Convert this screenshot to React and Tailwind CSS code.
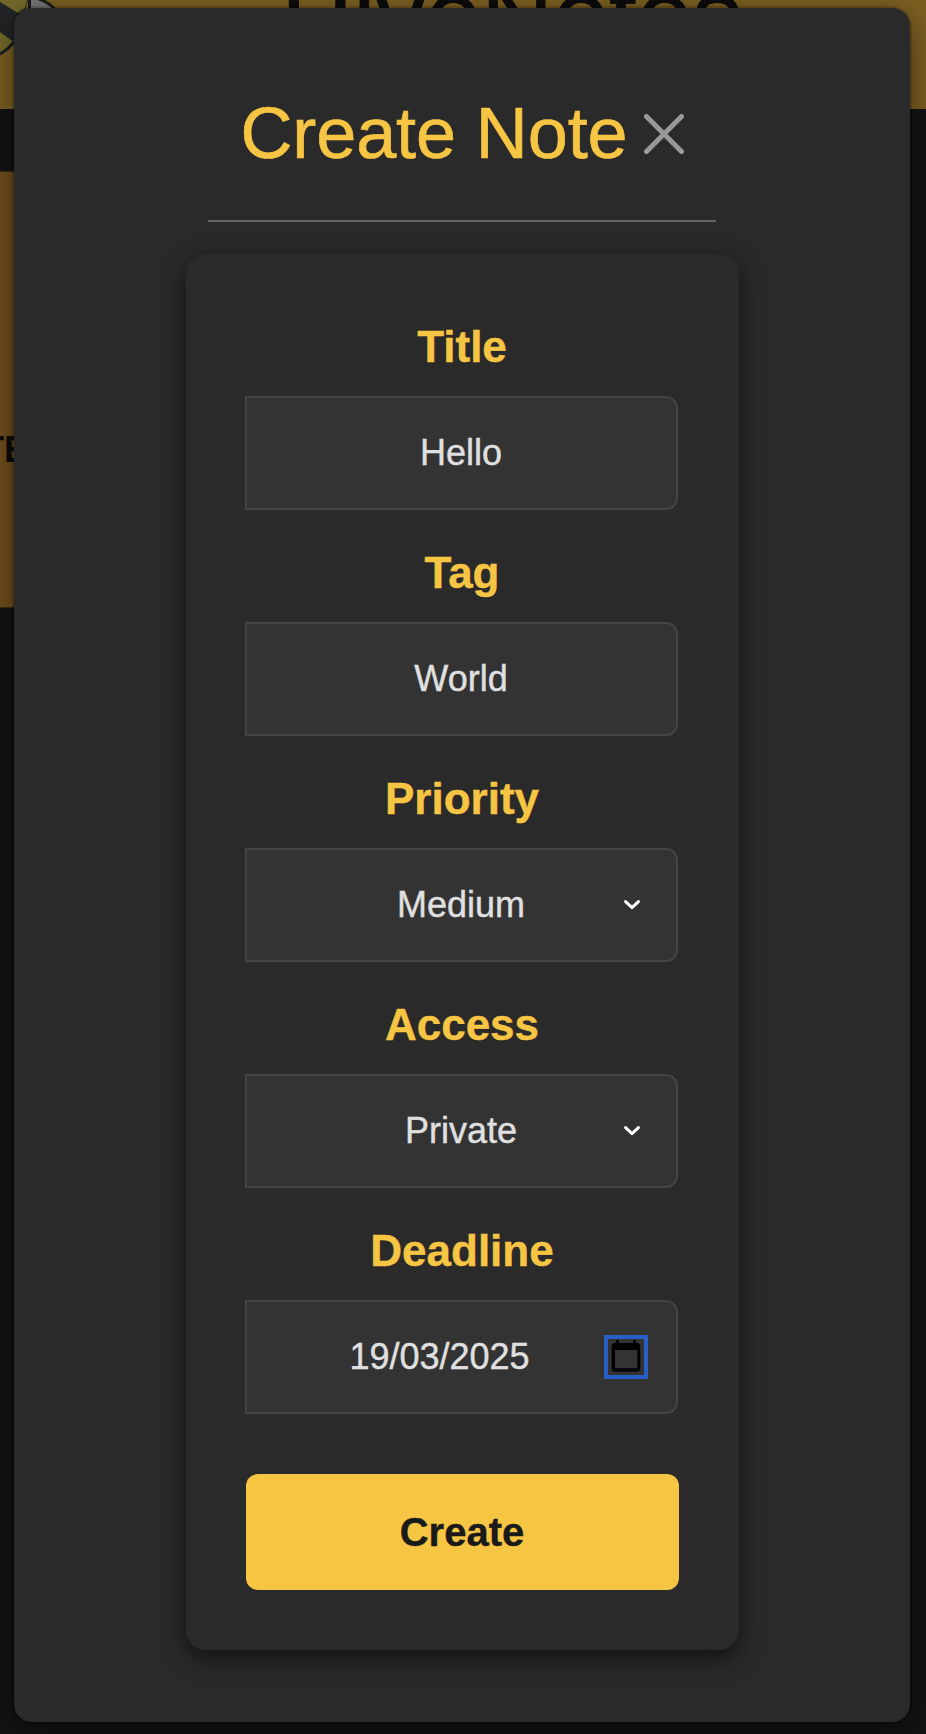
import React from 'react';

const fields = [
  { label: 'Title', value: 'Hello' },
  { label: 'Tag', value: 'World' },
  { label: 'Priority', value: 'Medium', kind: 'select' },
  { label: 'Access', value: 'Private', kind: 'select' },
  { label: 'Deadline', value: '19/03/2025', kind: 'date' },
];

function Chevron() {
  return (
    <svg className="absolute right-[36px] top-[49px] h-[12px] w-[16px]" viewBox="0 0 16 12" fill="none" stroke="#fff" strokeWidth="3" strokeLinecap="round" strokeLinejoin="round">
      <path d="M1.6 2.6 8 8.6l6.4-6" />
    </svg>
  );
}

function CalendarButton() {
  return (
    <span className="absolute right-[28px] top-[33px] h-[44px] w-[44px] border-4 border-[#295ec6]">
      <svg className="block h-[36px] w-[36px]" viewBox="0 0 36 36">
        <path
          fillRule="evenodd"
          fill="#000"
          d="M8 1h3v3h14V1h3v3h1a3.300 3.300 0 0 1 3.300 3.300V29.400a3.300 3.300 0 0 1-3.300 3.300H7a3.300 3.300 0 0 1-3.300-3.300V7.300A3.300 3.300 0 0 1 7 4H8zM7 11v18.300h22.300V11z"
        />
      </svg>
    </span>
  );
}

function Field({ label, value, kind }) {
  return (
    <div className="flex flex-col gap-6">
      <div className="pl-0.5 text-center text-[44px] font-bold leading-[50px] text-[#f7c544] [-webkit-text-stroke:0.4px_#f7c544]">{label}</div>
      <div className={`relative flex h-[114px] w-[433px] items-center justify-center rounded-r-xl border-2 border-[#444] bg-[#333] text-[36px] leading-10 text-[#e0e0e0] [-webkit-text-stroke:0.4px_#e0e0e0] ${kind === 'date' ? 'pr-[43px]' : ''}`}>
        {value}
        {kind === 'select' && <Chevron />}
        {kind === 'date' && <CalendarButton />}
      </div>
    </div>
  );
}

function Logo() {
  return (
    <svg className="block h-[60px] w-[60px]" viewBox="0 0 60 60">
      <path d="M0 0H28L25 11 13 42 0 55z" fill="#222426" />
      <path d="M0 0H27L25 8 18 13 0 2z" fill="#756a2b" />
      <path d="M0 32 13 41.500 0 54z" fill="#756a2b" />
      <path d="M14 41.500Q9 49 0 54" stroke="#1b1d1e" strokeWidth="3" fill="none" />
      <path d="M30 0H39Q48 3 53 9H31z" fill="#777" />
      <path d="M29.500 0V9M39 -1Q48 2 55 9" stroke="#1b1d1e" strokeWidth="3" fill="none" />
    </svg>
  );
}

function Backdrop() {
  return (
    <div className="flex h-[1734px] flex-col bg-[#131313]">
      <div className="flex h-[109px] shrink-0 overflow-hidden bg-[#7c6022]">
        <Logo />
        <div className="-mt-[35px] ml-[221px] text-[100px] leading-[100px] text-[#0c0c0c] [-webkit-text-stroke:0.8px_#0c0c0c]">HiveNotes</div>
      </div>
      <div className="mt-[62px] flex h-[437px] w-[14px] items-start justify-end overflow-hidden rounded-r-[3px] border-y border-[#3d2b10] bg-[#704f1c]">
        <div className="-mr-[14px] mt-[258px] text-[36px] font-bold leading-[40px] text-[#0b0b0b]">NOTE</div>
      </div>
    </div>
  );
}

export default function App() {
  return (
    <div className="relative h-[1734px] w-[926px] overflow-hidden font-['Liberation_Sans',Arial,sans-serif]">
      <Backdrop />
      <div className="absolute left-[14px] top-[8px] flex h-[1714px] w-[896px] flex-col items-center rounded-[18px] bg-[#2a2a2a] shadow-[0_0_0_2px_rgba(0,0,0,0.15),0_8px_32px_rgba(0,0,0,0.5)]">
        <div className="mt-[84px] flex h-[130px] w-[508px] justify-center border-b-2 border-[#666]">
          <h1 className="text-[72px] leading-[82px] tracking-[-0.1px] text-[#f7c544] [-webkit-text-stroke:0.7px_#f7c544]">Create Note</h1>
          <svg className="ml-[16px] mt-[22px] h-[40px] w-[40px]" viewBox="0 0 40 40" stroke="#999" strokeWidth="5" strokeLinecap="round">
            <path d="M2.500 2.500 37.500 37.500M37.500 2.500 2.500 37.500" />
          </svg>
        </div>
        <div className="mt-8 flex h-[1396px] w-[553px] flex-col items-start rounded-[20px] bg-[#2a2a2a] pl-[59px] pt-[68px] shadow-[0_8px_24px_rgba(0,0,0,0.6)]">
          <div className="flex flex-col gap-[38px]">
            {fields.map((f) => (
              <Field key={f.label} {...f} />
            ))}
          </div>
          <button className="ml-px mt-[60px] h-[116px] w-[433px] rounded-xl bg-[#f7c544] text-[40px] font-bold leading-[46px] text-[#1a1a1a] [-webkit-text-stroke:0.4px_#1a1a1a]">Create</button>
        </div>
      </div>
    </div>
  );
}
